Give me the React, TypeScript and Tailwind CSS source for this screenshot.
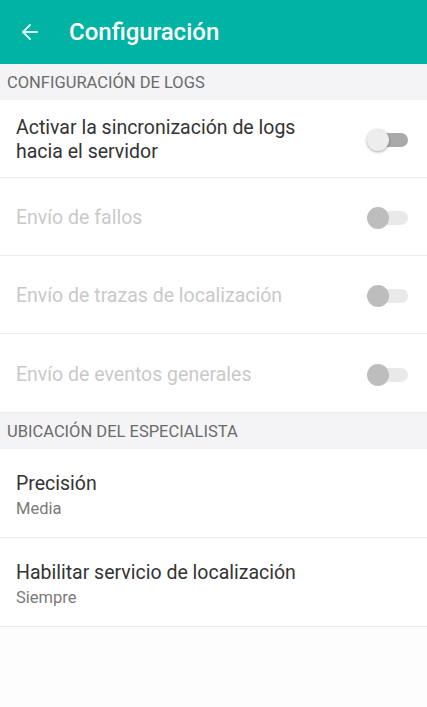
import { ArrowLeft } from "lucide-react";

type ToggleRowProps = {
  label: React.ReactNode;
  disabled?: boolean;
  tall?: boolean;
};

const Switch = ({ disabled }: { disabled?: boolean }) => {
  return (
    <div className="relative h-[22px] w-[42px]">
      <div
        className={`absolute left-[4px] top-[4px] h-[14px] w-[37px] rounded-full ${
          disabled ? "bg-[#e9e9e9]" : "bg-[#a9a9a9]"
        }`}
      />
      <div
        className={`absolute left-0 top-0 h-[22px] w-[22px] rounded-full ${
          disabled
            ? "bg-[#bdbdbd]"
            : "bg-[#ededed] shadow-[0_1px_3px_rgba(0,0,0,0.35)]"
        }`}
      />
    </div>
  );
};

const ToggleRow = ({ label, disabled, tall }: ToggleRowProps) => {
  return (
    <div
      className={`flex items-center justify-between border-b border-[#ececec] bg-white pl-4 pr-[18px] pt-[3px] ${
        tall ? "h-[79px]" : "h-[78px]"
      }`}
    >
      <span
        className={`text-[19.5px] leading-[24px] ${
          disabled ? "text-[#c9c9c9]" : "text-[#333333]"
        }`}
      >
        {label}
      </span>
      <Switch disabled={disabled} />
    </div>
  );
};

const SectionHeader = ({ title }: { title: string }) => (
  <div className="flex h-9 items-center bg-[#f4f4f6] px-[7px] pt-[3px] text-[16.5px] text-[#6b6b6b]">
    {title}
  </div>
);

const InfoRow = ({ title, value }: { title: string; value: string }) => (
  <div className="flex h-[89px] flex-col justify-center border-b border-[#ececec] bg-white px-4 pt-[4px]">
    <span className="text-[19.5px] leading-[25px] text-[#333333]">{title}</span>
    <span className="mt-[2px] text-[16.5px] leading-[22px] text-[#7a7a7a]">
      {value}
    </span>
  </div>
);

export default function App() {
  return (
    <div className="h-[707px] w-[427px] bg-[#fdfdfd] font-['Roboto',sans-serif]">
      <div className="flex h-16 items-center bg-[#00b3a3] pl-[18px]">
        <ArrowLeft className="h-6 w-6 text-[#d8f4f1]" strokeWidth={2} />
        <h1 className="ml-[27px] text-[24px] font-medium text-white">
          Configuración
        </h1>
      </div>

      <SectionHeader title="CONFIGURACIÓN DE LOGS" />
      <ToggleRow
        label={
          <>
            Activar la sincronización de logs
            <br />
            hacia el servidor
          </>
        }
      />
      <ToggleRow label="Envío de fallos" disabled />
      <ToggleRow label="Envío de trazas de localización" disabled />
      <ToggleRow label="Envío de eventos generales" disabled tall />

      <SectionHeader title="UBICACIÓN DEL ESPECIALISTA" />
      <InfoRow title="Precisión" value="Media" />
      <InfoRow title="Habilitar servicio de localización" value="Siempre" />
    </div>
  );
}
